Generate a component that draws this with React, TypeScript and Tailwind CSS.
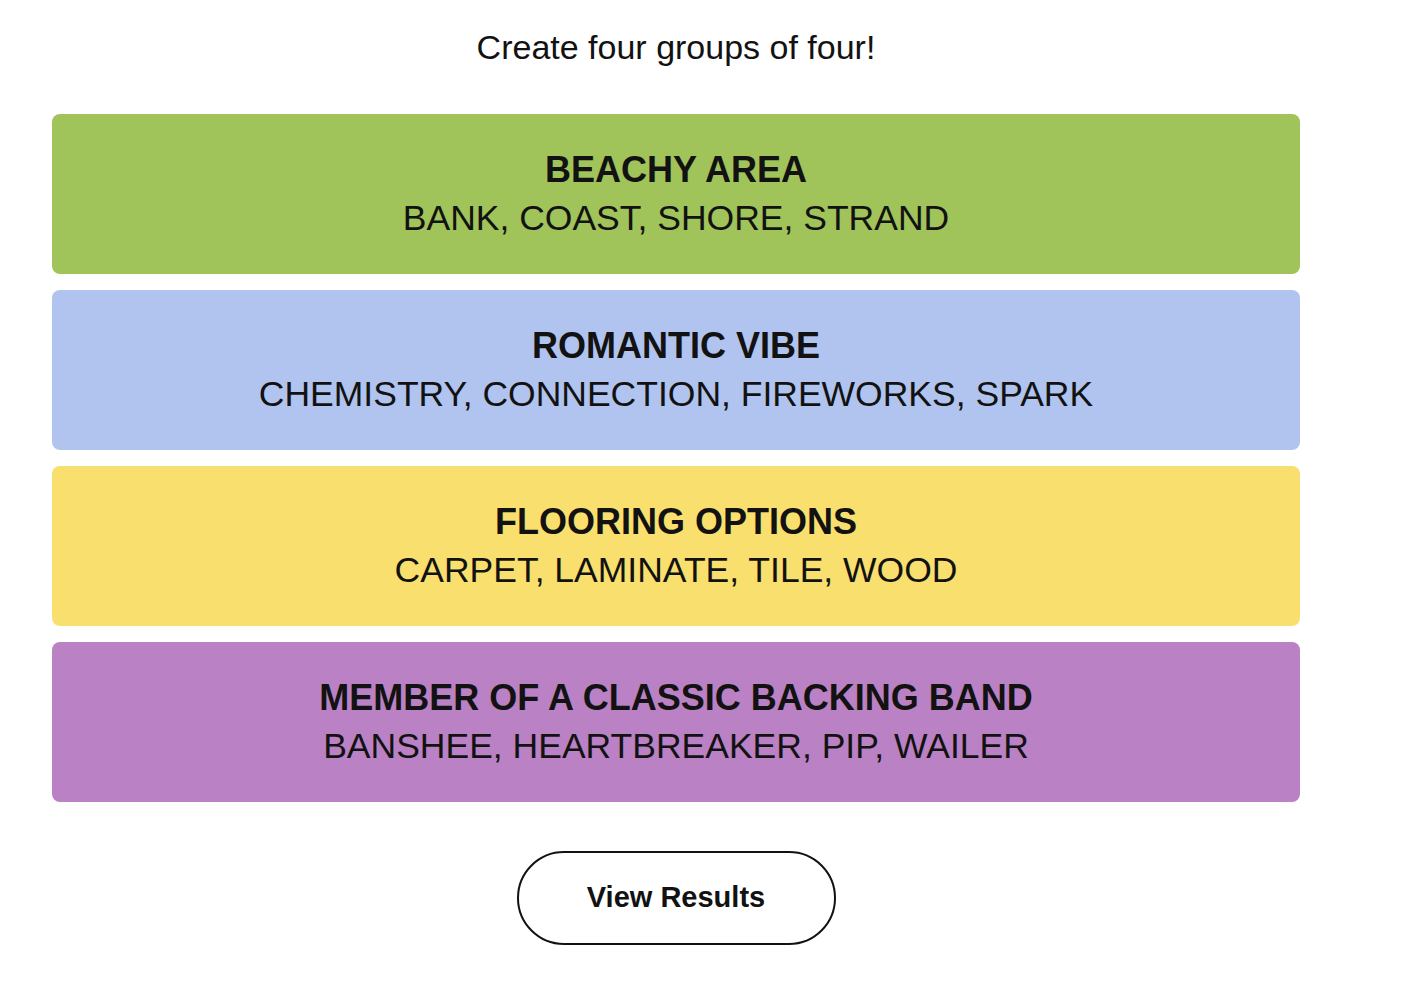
import React from 'react';

type Group = {
  title: string;
  words: string[];
  color: string;
};

const GROUPS: Group[] = [
  { title: 'BEACHY AREA', words: ['BANK', 'COAST', 'SHORE', 'STRAND'], color: 'bg-[#a0c35a]' },
  {
    title: 'ROMANTIC VIBE',
    words: ['CHEMISTRY', 'CONNECTION', 'FIREWORKS', 'SPARK'],
    color: 'bg-[#b0c4ef]',
  },
  {
    title: 'FLOORING OPTIONS',
    words: ['CARPET', 'LAMINATE', 'TILE', 'WOOD'],
    color: 'bg-[#f9df6d]',
  },
  {
    title: 'MEMBER OF A CLASSIC BACKING BAND',
    words: ['BANSHEE', 'HEARTBREAKER', 'PIP', 'WAILER'],
    color: 'bg-[#ba81c5]',
  },
];

//-------------------------------- GroupCard --------------------------------
const GroupCard = ({ group }: { group: Group }) => (
  <div
    className={`flex h-[160px] flex-col items-center justify-center rounded-lg leading-[49px] text-[#121212] ${group.color}`}
  >
    <div className="text-[36px] font-bold">{group.title}</div>
    <div className="text-[35.5px]">{group.words.join(', ')}</div>
  </div>
);

//-------------------------------- App --------------------------------
export default function App() {
  return (
    <div
      className="min-h-screen bg-white text-[#121212]"
      style={{ fontFamily: '"Liberation Sans", Arial, sans-serif' }}
    >
      <div className="ml-[52px] flex w-[1248px] flex-col items-center pt-[27px]">
        <h1 className="text-[34px] leading-[40px]">Create four groups of four!</h1>

        <div className="mt-[47px] flex w-full flex-col gap-4">
          {GROUPS.map((group) => (
            <GroupCard key={group.title} group={group} />
          ))}
        </div>

        <button
          type="button"
          className="mt-[49px] h-[94px] w-[319px] rounded-full border-2 border-[#121212] bg-white text-[29px] font-bold"
        >
          View Results
        </button>
      </div>
    </div>
  );
}
